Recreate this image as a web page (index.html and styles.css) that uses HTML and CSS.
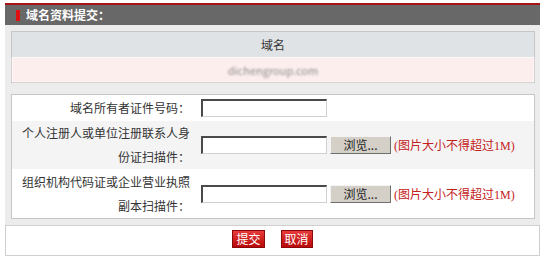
FILE: index.html
```html
<!DOCTYPE html>
<html>
<head>
<meta charset="utf-8">
<title>域名资料提交</title>
<link rel="stylesheet" href="styles.css">
</head>
<body>
<div class="wrap">
	<div class="title"><span class="mark"></span>域名资料提交：</div>
	<div class="panel">
		<div class="domain">
			<div class="domain-head">域名</div>
			<div class="domain-name">dichengroup.com</div>
		</div>
		<div class="form">
			<div class="row">
				<div class="label">域名所有者证件号码：</div>
				<div class="field"><input type="text" class="txt"></div>
			</div>
			<div class="row row-alt">
				<div class="label">个人注册人或单位注册联系人身<br>份证扫描件：</div>
				<div class="field"><input type="text" class="txt"><button class="browse">浏览...</button><span class="tip">(图片大小不得超过1M)</span></div>
			</div>
			<div class="row row-last">
				<div class="label">组织机构代码证或企业营业执照<br>副本扫描件：</div>
				<div class="field"><input type="text" class="txt"><button class="browse">浏览...</button><span class="tip">(图片大小不得超过1M)</span></div>
			</div>
		</div>
	</div>
	<div class="actions">
		<button class="btn-red">提交</button>
		<button class="btn-red">取消</button>
	</div>
</div>
</body>
</html>
```

FILE: styles.css
```css
body{margin:0; background:#fff; font-family:"Noto Sans CJK SC", "Liberation Sans", sans-serif; font-size:12px; color:#333;}
.wrap{width:535px; margin:3px 0 0 5px;}
.title{height:20px; line-height:20px; border-top:2px solid #a81414; background:#686868; color:#fff; font-weight:bold; font-size:12px; display:flex; align-items:center;}
.title .mark{display:block; width:4px; height:11px; background:#d11; margin:0 6px 0 11px;}
.panel{background:#ececec; padding:6px 5px 6px 6px; display:flex; flex-direction:column; gap:11px;}
.domain{border:1px solid #c6c6c6; box-shadow:inset 0 0 0 1px #fff;}
.domain-head{height:25px; line-height:25px; text-align:center; background:#dfe3e6; border-bottom:1px solid #fff; color:#333;}
.domain-name{height:24px; line-height:24px; text-align:center; background:#fdeeee; color:#8c8c8c; font-size:11px; filter:blur(0.9px);}
.form{border:1px solid #c6c6c6; background:#fff;}
.row{display:grid; grid-template-columns:183px 1fr; align-items:center; min-height:26px;}
.row-alt{background:#f4f4f4; min-height:47px;}
.row-last{min-height:49px;}
.label{text-align:right; padding-right:5px; line-height:24px;}
.field{padding-left:6px; display:flex; align-items:center;}
.txt{box-sizing:border-box; width:126px; height:18px; margin:0; padding:0; border-style:solid; border-width:2px 1px 1px 2px; border-color:#4a4a4a #d0d0d0 #d0d0d0 #4a4a4a; background:#fff;}
.browse{box-sizing:border-box; width:61px; height:18px; margin:0 3px; padding:0; font-family:"Noto Sans CJK SC", sans-serif; font-size:12px; line-height:14px; color:#222; background:#d4d0c8; border:1px solid; border-color:#f4f4f4 #6e6e6e #6e6e6e #f4f4f4;}
.tip{color:#c42020; font-family:"Liberation Serif", "Noto Sans CJK SC", serif; font-size:12px;}
.actions{box-sizing:border-box; height:31px; border:1px solid #cfcfcf; background:#fff; display:flex; justify-content:center; align-items:center; gap:16px; padding-bottom:4px;}
.btn-red{box-sizing:border-box; height:18px; padding:0 3px; margin:0; font-family:"Noto Sans CJK SC", sans-serif; font-size:12px; line-height:14px; color:#fff; background:linear-gradient(#e83a3a, #b80808); border:1px solid #8a0a0a;}
```
